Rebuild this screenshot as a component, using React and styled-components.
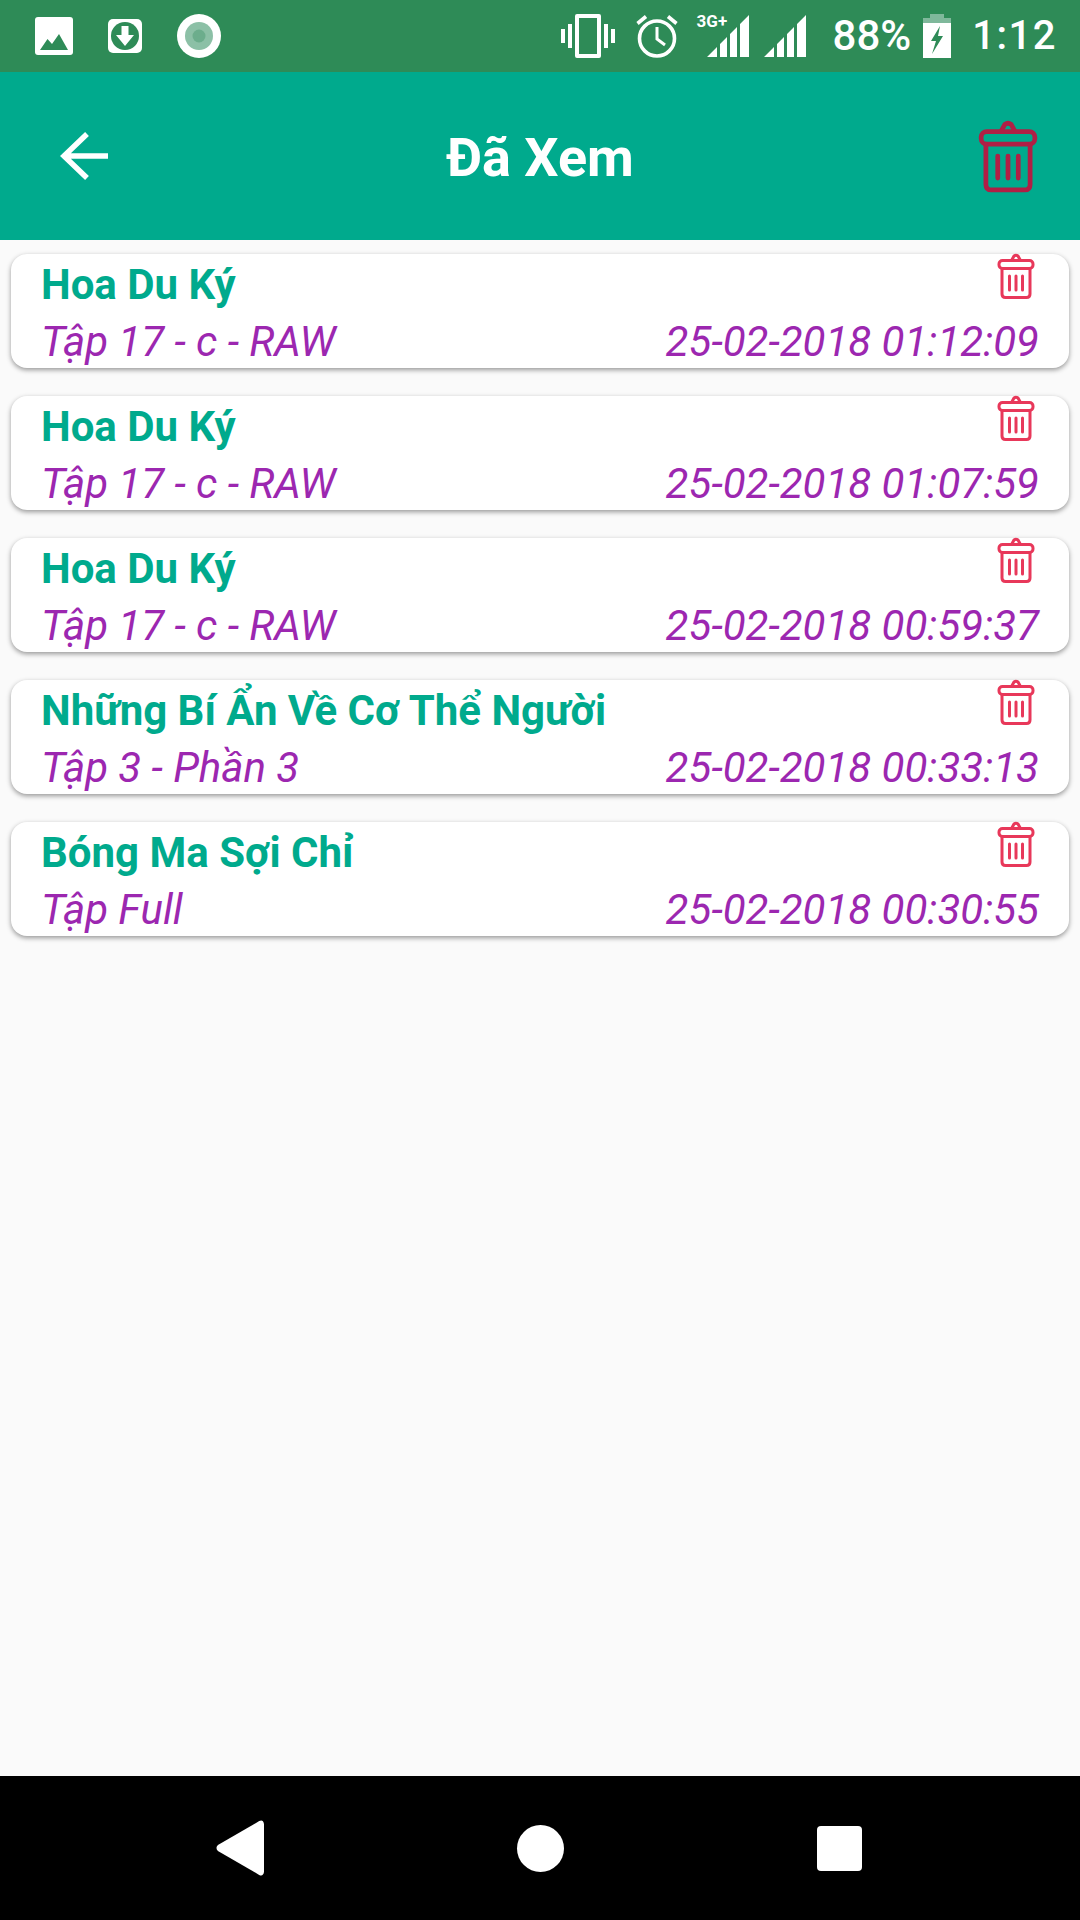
import React from "react";
import styled, { createGlobalStyle } from "styled-components";

const history = [
  { title: "Hoa Du Ký", episode: "Tập 17 - c - RAW", time: "25-02-2018 01:12:09" },
  { title: "Hoa Du Ký", episode: "Tập 17 - c - RAW", time: "25-02-2018 01:07:59" },
  { title: "Hoa Du Ký", episode: "Tập 17 - c - RAW", time: "25-02-2018 00:59:37" },
  { title: "Những Bí Ẩn Về Cơ Thể Người", episode: "Tập 3 - Phần 3", time: "25-02-2018 00:33:13" },
  { title: "Bóng Ma Sợi Chỉ", episode: "Tập Full", time: "25-02-2018 00:30:55" },
];

const TrashIcon = ({ width, height, color }) => (
  <svg width={width} height={height} viewBox="0 0 38 46" fill="none" stroke={color} strokeWidth="3" strokeLinejoin="round" strokeLinecap="round">
    <path d="M14.5 7.5 L17 3 Q19 1.5 21 3 L23.5 7.5" />
    <rect x="2" y="7.5" width="34" height="8" rx="3.5" />
    <path d="M5 15.5 V41 Q5 44.5 8.5 44.5 H29.5 Q33 44.5 33 41 V15.5" />
    <path d="M12.5 23 V37 M19 23 V37 M25.5 23 V37" />
  </svg>
);

export default function App() {
  return (
    <>
      <GlobalStyle />
      <Page>
        <StatusBar>
          <StatusLeft>
            <svg width="38" height="38" viewBox="0 0 38 38">
              <rect width="38" height="38" rx="3" fill="#fff" />
              <path d="M5 33 L12.5 22 L17 27 L24 17 L33 33 Z" fill="#2e8b57" />
            </svg>
            <svg width="34" height="34" viewBox="0 0 34 34">
              <rect width="34" height="34" rx="5" fill="#fff" />
              <circle cx="17" cy="17" r="14" fill="#2e8b57" />
              <path d="M13.5 7 H20.5 V16 H26 L17 27 L8 16 H13.5 Z" fill="#fff" />
            </svg>
            <svg width="44" height="44" viewBox="0 0 44 44">
              <circle cx="22" cy="22" r="22" fill="#fff" />
              <circle cx="22" cy="22" r="14" fill="#8cc0a6" />
              <circle cx="22" cy="22" r="6.5" fill="#6cad8c" />
            </svg>
          </StatusLeft>
          <StatusRight>
            <svg width="54" height="44" viewBox="0 0 54 44" fill="#fff">
              <path fillRule="evenodd" d="M16 0 H38 Q40 0 40 2 V42 Q40 44 38 44 H16 Q14 44 14 42 V2 Q14 0 16 0 Z M18 4 V40 H36 V4 Z" />
              <rect x="0" y="15" width="4" height="14" />
              <rect x="7" y="10" width="4" height="24" />
              <rect x="43" y="10" width="4" height="24" />
              <rect x="50" y="15" width="4" height="14" />
            </svg>
            <AlarmSlot>
              <svg width="42" height="44" viewBox="0 0 42 44" fill="none" stroke="#fff" strokeWidth="3.6">
                <circle cx="21" cy="24.5" r="17.5" />
                <path d="M21 13 V25 L29 31" strokeWidth="3" />
                <path d="M1.5 9.5 L10 2.5 M40.5 9.5 L32 2.5" />
              </svg>
            </AlarmSlot>
            <NetworkSlot>
              <NetworkLabel>3G+</NetworkLabel>
              <svg width="42" height="42" viewBox="0 0 42 42" fill="#fff">
                <path d="M0 42 L10 32 V42 Z M13 29 L20 22 V42 H13 Z M23 19 L30 12 V42 H23 Z M33 9 L42 0 V42 H33 Z" />
              </svg>
            </NetworkSlot>
            <SignalSlot>
              <svg width="42" height="42" viewBox="0 0 42 42" fill="#fff">
                <path d="M0 42 L10 32 V42 Z M13 29 L20 22 V42 H13 Z M23 19 L30 12 V42 H23 Z M33 9 L42 0 V42 H33 Z" />
              </svg>
            </SignalSlot>
            <Percent>88%</Percent>
            <BatterySlot>
              <svg width="28" height="44" viewBox="0 0 28 44">
                <path d="M7 0 H21 V4 H28 V9 H0 V4 H7 Z" fill="#7fb89b" />
                <path fillRule="evenodd" d="M0 9 H28 V44 H0 Z M17 12 L8 27 H13 L9 40 L20 22 H15 Z" fill="#fff" />
              </svg>
            </BatterySlot>
            <Clock>1:12</Clock>
          </StatusRight>
        </StatusBar>

        <AppBar>
          <BackButton>
            <svg width="48" height="48" viewBox="0 0 48 48" fill="none" stroke="#fff" strokeWidth="5.5">
              <path d="M48 24 H4 M27 2 L4 24 L27 46" />
            </svg>
          </BackButton>
          <Title>Đã Xem</Title>
          <ClearButton>
            <TrashIcon width={60} height={74} color="#b01f45" />
          </ClearButton>
        </AppBar>

        <List>
          {history.map((item) => (
            <Card key={item.time}>
              <CardTop>
                <ItemTitle>{item.title}</ItemTitle>
                <CardTrash>
                  <TrashIcon width={38} height={46} color="#e8385a" />
                </CardTrash>
              </CardTop>
              <CardBottom>
                <Meta>{item.episode}</Meta>
                <Meta>{item.time}</Meta>
              </CardBottom>
            </Card>
          ))}
        </List>

        <NavBar>
          <svg width="48" height="56" viewBox="0 0 50 58" fill="#fff">
            <path d="M45 1 Q49 -1 50 4 V54 Q49 59 45 57 L2 32 Q-1 29 2 26 Z" />
          </svg>
          <HomeDot />
          <RecentSquare />
        </NavBar>
      </Page>
    </>
  );
}

const GlobalStyle = createGlobalStyle`
  html, body {
    margin: 0;
    padding: 0;
    background: #fafafa;
  }
  * {
    box-sizing: border-box;
  }
`;

const Page = styled.div`
  width: 1080px;
  height: 1920px;
  display: flex;
  flex-direction: column;
  font-family: Roboto, "Noto Sans", sans-serif;
  background: #fafafa;
`;

const StatusBar = styled.div`
  height: 72px;
  flex: none;
  background: #2e8b57;
  display: flex;
  align-items: center;
  justify-content: space-between;
  padding: 0 23px 0 35px;
  color: #fff;
`;

const StatusLeft = styled.div`
  display: flex;
  align-items: center;
  gap: 35px;
`;

const StatusRight = styled.div`
  display: flex;
  align-items: center;
`;

const AlarmSlot = styled.div`
  display: flex;
  margin-left: 21px;
`;

const NetworkSlot = styled.div`
  display: flex;
  position: relative;
  margin-left: 29px;
`;

const NetworkLabel = styled.span`
  position: absolute;
  left: -10px;
  top: -3px;
  font-size: 17px;
  font-weight: 700;
  line-height: 18px;
`;

const SignalSlot = styled.div`
  display: flex;
  margin-left: 15px;
`;

const Percent = styled.span`
  margin-left: 27px;
  font-size: 42px;
  font-weight: 500;
  line-height: 44px;
`;

const BatterySlot = styled.div`
  display: flex;
  margin-left: 12px;
`;

const Clock = styled.span`
  margin-left: 21px;
  font-size: 40px;
  font-weight: 500;
  line-height: 44px;
  letter-spacing: 1.5px;
`;

const AppBar = styled.header`
  height: 168px;
  flex: none;
  background: #00aa8d;
  display: flex;
  align-items: center;
  justify-content: space-between;
  padding: 0 42px 0 60px;
`;

const BackButton = styled.div`
  display: flex;
`;

const Title = styled.h1`
  margin: 0;
  flex: 1;
  text-align: center;
  color: #fff;
  font-size: 54px;
  font-weight: 700;
  line-height: 62px;
  padding: 3px 6px 0 0;
`;

const ClearButton = styled.div`
  display: flex;
`;

const List = styled.main`
  flex: 1;
  display: flex;
  flex-direction: column;
  gap: 28px;
  padding: 14px 11px;
`;

const Card = styled.article`
  height: 114px;
  background: #fff;
  border-radius: 16px;
  box-shadow: 0 2px 5px rgba(0, 0, 0, 0.4);
  padding: 0 30px;
  display: flex;
  flex-direction: column;
`;

const CardTop = styled.div`
  height: 62px;
  display: flex;
  justify-content: space-between;
  align-items: flex-start;
  padding-right: 4px;
`;

const CardTrash = styled.div`
  display: flex;
  margin-top: -1px;
`;

const ItemTitle = styled.div`
  color: #00aa8d;
  font-size: 42px;
  font-weight: 700;
  line-height: 51px;
  margin-top: 5px;
`;

const CardBottom = styled.div`
  display: flex;
  justify-content: space-between;
`;

const Meta = styled.span`
  color: #9c27b0;
  font-size: 42px;
  font-style: italic;
  line-height: 51px;
`;

const NavBar = styled.nav`
  height: 144px;
  flex: none;
  background: #000;
  display: flex;
  align-items: center;
  justify-content: space-between;
  padding: 0 218px 0 216px;
`;

const HomeDot = styled.div`
  width: 47px;
  height: 47px;
  border-radius: 50%;
  background: #fff;
`;

const RecentSquare = styled.div`
  width: 45px;
  height: 45px;
  border-radius: 4px;
  background: #fff;
`;
